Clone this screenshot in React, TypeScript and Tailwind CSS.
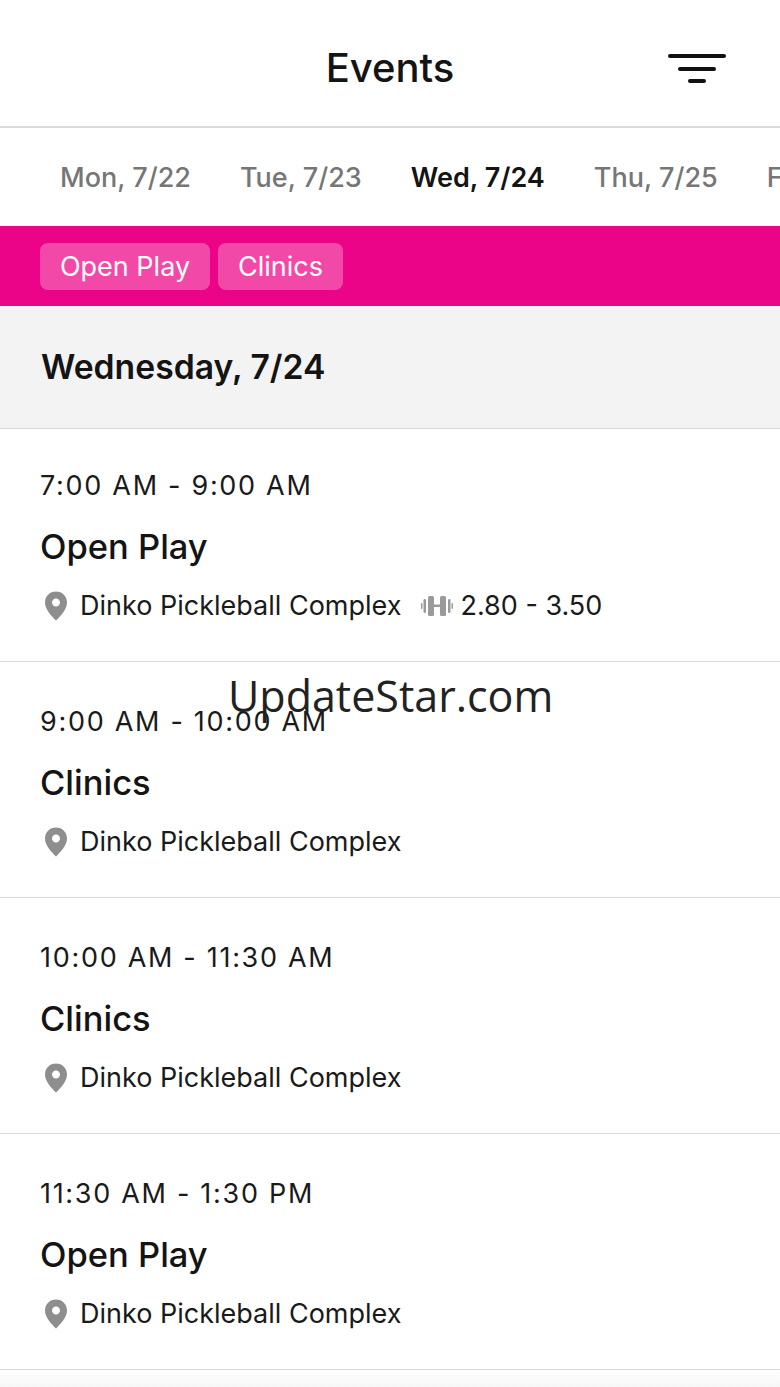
import React from "react";

const days = ["Mon, 7/22", "Tue, 7/23", "Wed, 7/24", "Thu, 7/25", "Fri, 7/26"];

const events = [
  { time: "7:00 AM - 9:00 AM", title: "Open Play", level: "2.80 - 3.50", first: true },
  { time: "9:00 AM - 10:00 AM", title: "Clinics" },
  { time: "10:00 AM - 11:30 AM", title: "Clinics" },
  { time: "11:30 AM - 1:30 PM", title: "Open Play" },
];

const FilterIcon = () => (
  <svg width="60" height="32" viewBox="0 0 60 32" fill="none" stroke="#111111" strokeWidth="4" strokeLinecap="round">
    <path d="M3 3H57" />
    <path d="M13 16H47" />
    <path d="M23 28H37" />
  </svg>
);

const PinIcon = () => (
  <svg width="24" height="30" viewBox="0 0 24 30" className="shrink-0">
    <path
      fillRule="evenodd"
      fill="#8e8e8e"
      d="M12 0.5C5.6 0.5 1 5.3 1 11.4C1 18.5 8 25.5 12 29.5C16 25.5 23 18.5 23 11.4C23 5.3 18.4 0.5 12 0.5ZM12 7.5C14.3 7.5 16 9.3 16 11.5C16 13.7 14.3 15.5 12 15.5C9.7 15.5 8 13.7 8 11.5C8 9.3 9.7 7.5 12 7.5Z"
    />
  </svg>
);

const DumbbellIcon = () => (
  <svg width="32" height="22" viewBox="0 0 32 22" className="shrink-0" fill="#9a9a9a">
    <rect x="0" y="8" width="1.5" height="6" rx="0.75" />
    <rect x="2.5" y="4" width="2.5" height="14" rx="1.25" />
    <rect x="7" y="1" width="6" height="20" rx="1.5" />
    <rect x="13" y="9.5" width="6" height="2.5" />
    <rect x="19" y="1" width="6" height="20" rx="1.5" />
    <rect x="27" y="4" width="2.5" height="14" rx="1.25" />
    <rect x="30.5" y="8" width="1.5" height="6" rx="0.75" />
  </svg>
);

const EventRow = ({ time, title, level, first }: { time: string; title: string; level?: string; first?: boolean }) => (
  <div className={`${first ? "h-[233px] pt-[40px]" : "h-[236px] pt-[43px]"} border-b border-[#d9d9d9] pl-[40px]`}>
    <div className="text-[27px] leading-[34px] tracking-[1.7px] text-[#1a1a1a]">{time}</div>
    <div className="mt-[24px] text-[34.5px] leading-[40px] font-medium text-[#141414]">{title}</div>
    <div className="mt-[21px] flex h-[36px] items-center text-[27px] text-[#1a1a1a]">
      <div className="ml-[4px] mr-[12px]">
        <PinIcon />
      </div>
      <span>Dinko Pickleball Complex</span>
      {level && (
        <div className="ml-[20px] flex items-center gap-[7px]">
          <DumbbellIcon />
          <span>{level}</span>
        </div>
      )}
    </div>
  </div>
);

export default function App() {
  return (
    <div className="relative h-[1387px] w-[780px] overflow-hidden bg-white font-['Inter','Liberation_Sans',sans-serif]">
      <header className="relative flex h-[128px] items-center justify-center border-b-2 border-[#dcdcdc] pt-[9px]">
        <h1 className="text-[40px] font-medium leading-[46px] text-[#141414]">Events</h1>
        <div className="absolute right-[53px] top-[53px] flex">
          <FilterIcon />
        </div>
      </header>

      <nav className="flex h-[98px] items-center gap-[49px] overflow-hidden whitespace-nowrap pl-[60px] pt-[2px] text-[27px]">
        {days.map((day) => (
          <span key={day} className={day === "Wed, 7/24" ? "font-semibold text-[#141414]" : "font-medium text-[#767676]"}>
            {day}
          </span>
        ))}
      </nav>

      <div className="flex h-[80px] items-start gap-[8px] bg-[#ec0488] pl-[40px] pt-[17px]">
        <div className="flex h-[47px] w-[170px] items-center justify-center rounded-[8px] bg-[#f249a8] pt-[2px] text-[27px] text-white">Open Play</div>
        <div className="flex h-[47px] w-[125px] items-center justify-center rounded-[8px] bg-[#f249a8] pt-[2px] text-[27px] text-white">Clinics</div>
      </div>

      <div className="flex h-[123px] items-center border-b border-[#d9d9d9] bg-[#f3f3f3] pl-[41px]">
        <h2 className="text-[33.7px] font-semibold text-[#141414]">Wednesday, 7/24</h2>
      </div>

      {events.map((event) => (
        <EventRow key={event.time} {...event} />
      ))}

      <div className="h-[17px] bg-gradient-to-b from-white to-[#f6f6f6]" />

      <div className="absolute left-[228px] top-[666px] font-['Open_Sans',sans-serif] text-[43px] leading-[60px] text-[#222222]">
        UpdateStar.com
      </div>
    </div>
  );
}
